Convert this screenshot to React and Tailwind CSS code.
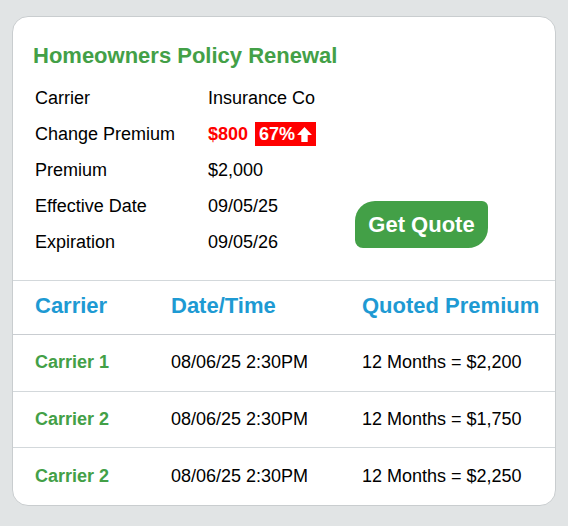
import React from "react";

const details = [
  { label: "Carrier", value: "Insurance Co" },
  { label: "Change Premium", value: null },
  { label: "Premium", value: "$2,000" },
  { label: "Effective Date", value: "09/05/25" },
  { label: "Expiration", value: "09/05/26" },
];

const quotes = [
  { carrier: "Carrier 1", date: "08/06/25 2:30PM", premium: "12 Months = $2,200" },
  { carrier: "Carrier 2", date: "08/06/25 2:30PM", premium: "12 Months = $1,750" },
  { carrier: "Carrier 2", date: "08/06/25 2:30PM", premium: "12 Months = $2,250" },
];

const ArrowUp = () => (
  <svg width="17" height="17" viewBox="0 0 16 16" className="ml-[1px]">
    <path d="M8 1 L15 8.5 H11 V15 H5 V8.5 H1 Z" fill="#fff" />
  </svg>
);

export default function App() {
  return (
    <div className="min-h-[526px] bg-[#e1e4e5] pt-[16px] pl-[12px] font-['Liberation_Sans',Arial,sans-serif]">
      <div className="w-[544px] h-[490px] bg-white border border-[#c9cdcf] rounded-[16px] overflow-hidden flex flex-col">
        {/* Policy summary */}
        <div className="pt-[25px] pl-[20px] pr-[20px] pb-[20px] border-b border-[#d3d8db]">
          <h2 className="text-[22px] leading-[28px] font-bold text-[#43a047]">
            Homeowners Policy Renewal
          </h2>
          <div className="flex mt-[10px]">
            <div className="pl-[2px] w-[322px]">
              {details.map((d) => (
                <div key={d.label} className="flex items-center h-[36px] text-[18px] text-black">
                  <span className="w-[173px]">{d.label}</span>
                  {d.value ? (
                    <span>{d.value}</span>
                  ) : (
                    <span className="flex items-center">
                      <span className="font-bold text-[#ff0000]">$800</span>
                      <span className="ml-[7px] bg-[#ff0000] text-white font-bold h-[24px] pl-[4px] pr-[3px] flex items-center">
                        67%
                        <ArrowUp />
                      </span>
                    </span>
                  )}
                </div>
              ))}
            </div>
            <div className="flex items-end pb-[12px]">
              <button className="w-[133px] h-[47px] bg-[#43a047] text-white text-[22px] font-bold rounded-tl-[20px] rounded-tr-[6px] rounded-br-[20px] rounded-bl-[8px]">
                Get Quote
              </button>
            </div>
          </div>
        </div>

        {/* Quotes table */}
        <div className="grid grid-cols-[136px_191px_1fr] pl-[22px] pb-[3px] items-center h-[54px] border-b border-[#c9cdd1] text-[22px] font-bold text-[#1e9ad3]">
          <span>Carrier</span>
          <span>Date/Time</span>
          <span>Quoted Premium</span>
        </div>
        {quotes.map((q, i) => (
          <div
            key={i}
            className={
              "grid grid-cols-[136px_191px_1fr] pl-[22px] items-center h-[57px] text-[18px] " +
              (i < quotes.length - 1 ? "border-b border-[#d3d8db]" : "")
            }
          >
            <span className="font-bold text-[#43a047]">{q.carrier}</span>
            <span className="text-black">{q.date}</span>
            <span className="text-black">{q.premium}</span>
          </div>
        ))}
      </div>
    </div>
  );
}
